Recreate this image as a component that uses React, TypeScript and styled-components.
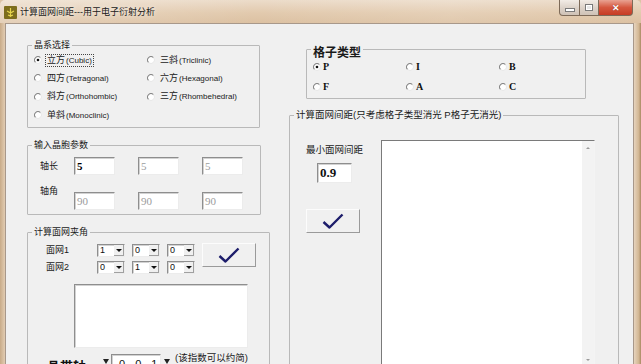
import React from 'react'
import styled, {createGlobalStyle} from 'styled-components'

const GlobalStyle = createGlobalStyle`
    html, body {
        margin: 0;
        padding: 0;
        background: #f0f0f0;
    }
    body {
        font-family: "Liberation Sans", "Noto Sans CJK SC", sans-serif;
        color: #111;
    }
`

const crystalSystems = [
    ['立方', 'Cubic'],
    ['三斜', 'Triclinic'],
    ['四方', 'Tetragonal'],
    ['六方', 'Hexagonal'],
    ['斜方', 'Orthohombic'],
    ['三方', 'Rhombehedral'],
    ['单斜', 'Monoclinic'],
]

const latticeTypes = ['P', 'I', 'B', 'F', 'A', 'C']

const Radio = ({checked}: {checked?: boolean}) => (
    <RadioSvg width="8" height="8" viewBox="0 0 12 12">
        <circle cx="6" cy="6" r="5" fill="#fff" />
        <path d="M9.6 2.4 A5 5 0 0 0 2.4 9.6" stroke="#8a8a8a" strokeWidth="1.6" fill="none" />
        <path d="M9.6 2.4 A5 5 0 0 1 2.4 9.6" stroke="#e4e4e4" strokeWidth="1.2" fill="none" />
        {checked && <circle cx="6" cy="6" r="2" fill="#111" />}
    </RadioSvg>
)

const Check = () => (
    <svg width="22" height="16" viewBox="0 0 22 16">
        <path d="M1.5 9 L7.5 14.5 L20.5 1.5" stroke="#1d1d6b" strokeWidth="2.4" fill="none" strokeLinejoin="round" />
    </svg>
)

const Combo = ({value}: {value: string}) => (
    <ComboBox>
        <ComboText>{value}</ComboText>
        <ComboButton>
            <DownTriangle />
        </ComboButton>
    </ComboBox>
)

export default function App() {
    return (
        <Window>
            <GlobalStyle />
            <TitleBar>
                <TitleIcon width="13" height="13" viewBox="0 0 13 13">
                    <rect x="0" y="0" width="13" height="13" rx="1" fill="#7d6d1c" />
                    <path d="M6.5 2 L6.5 11 M3 5 L6.5 7 L10 5 M4 9 L6.5 10 L9 9" stroke="#e8d64a" strokeWidth="1.2" fill="none" />
                </TitleIcon>
                <TitleText>计算面网间距---用于电子衍射分析</TitleText>
                <CaptionButtons>
                    <CaptionButton $w={21}>
                        <MinGlyph />
                    </CaptionButton>
                    <CaptionButton $w={19}>
                        <MaxGlyph />
                    </CaptionButton>
                    <CaptionButton $w={34} $close>
                        <CloseGlyph>✕</CloseGlyph>
                    </CaptionButton>
                </CaptionButtons>
            </TitleBar>
            <FrameRow>
                <SideFrame $w={5} />
                <Client>
                    <LeftColumn>
                        <GroupBox $w={233} $h={83}>
                            <GroupTitle>晶系选择</GroupTitle>
                            <SystemGrid>
                                {crystalSystems.map(([cn, en], i) => (
                                    <RadioItem key={en} $gap={4}>
                                        <Radio checked={i === 0} />
                                        <RadioText $focus={i === 0}>
                                            {cn}
                                            <Latin>({en})</Latin>
                                        </RadioText>
                                    </RadioItem>
                                ))}
                            </SystemGrid>
                        </GroupBox>

                        <GroupBox $w={234} $h={70} $mt={17}>
                            <GroupTitle>输入晶胞参数</GroupTitle>
                            <ParamGrid>
                                <ParamLabel>轴长</ParamLabel>
                                <Field>5</Field>
                                <Field $dim>5</Field>
                                <Field $dim>5</Field>
                                <ParamLabel $raised>轴角</ParamLabel>
                                <Field $dim>90</Field>
                                <Field $dim>90</Field>
                                <Field $dim>90</Field>
                            </ParamGrid>
                        </GroupBox>

                        <GroupBox $w={243} $h={200} $mt={17}>
                            <GroupTitle>计算面网夹角</GroupTitle>
                            <PlaneGrid>
                                <PlaneLabel>面网1</PlaneLabel>
                                <Combo value="1" />
                                <Combo value="0" />
                                <Combo value="0" />
                                <PlaneButton>
                                    <Check />
                                </PlaneButton>
                                <PlaneLabel>面网2</PlaneLabel>
                                <Combo value="0" />
                                <Combo value="1" />
                                <Combo value="0" />
                            </PlaneGrid>
                            <AngleResult />
                            <ZoneRow>
                                <ZoneLabel>晶带轴</ZoneLabel>
                                <SpinArrow />
                                <SpinBox>
                                    <span>0</span>
                                    <span>0</span>
                                    <span>1</span>
                                </SpinBox>
                                <SpinArrow $right />
                                <Hint>(该指数可以约简)</Hint>
                            </ZoneRow>
                        </GroupBox>
                    </LeftColumn>

                    <RightColumn>
                        <GroupBox $w={280} $h={50} $mt={4} $ml={17}>
                            <GroupTitle $bold>格子类型</GroupTitle>
                            <LatticeGrid>
                                {latticeTypes.map((t, i) => (
                                    <RadioItem key={t} $gap={2}>
                                        <Radio checked={i === 0} />
                                        <LatticeText>{t}</LatticeText>
                                    </RadioItem>
                                ))}
                            </LatticeGrid>
                        </GroupBox>

                        <GroupBox $w={330} $h={260} $mt={16}>
                            <GroupTitle $wide>计算面网间距(只考虑格子类型消光 P格子无消光)</GroupTitle>
                            <SpacingRow>
                                <SpacingControls>
                                    <SpacingLabel>最小面网间距</SpacingLabel>
                                    <MinField>0.9</MinField>
                                    <SpacingButton>
                                        <Check />
                                    </SpacingButton>
                                </SpacingControls>
                                <ListBox>
                                    <ListArea />
                                    <ScrollBar>
                                        <ScrollArrow />
                                        <ScrollArrow $down />
                                    </ScrollBar>
                                </ListBox>
                            </SpacingRow>
                        </GroupBox>
                    </RightColumn>
                </Client>
                <SideFrame $w={7} $right />
            </FrameRow>
        </Window>
    )
}

const Window = styled('div')`
    width: 641px;
    height: 364px;
    overflow: hidden;
    display: flex;
    flex-direction: column;
    background: #dcc3a6;
`

const TitleBar = styled('div')`
    height: 23px;
    flex: none;
    display: flex;
    align-items: flex-start;
    background: linear-gradient(90deg, rgba(255, 255, 255, 0.25), rgba(255, 255, 255, 0) 40%, rgba(255, 255, 255, 0.12) 70%, rgba(255, 255, 255, 0)),
        linear-gradient(180deg, #ecdcca 0%, #e2caae 55%, #dcc1a2 100%);
    border-top-left-radius: 5px;
    border-top-right-radius: 5px;
`

const TitleIcon = styled('svg')`
    flex: none;
    margin: 6px 3px 0 4px;
`

const TitleText = styled('div')`
    margin-top: 6px;
    font-size: 9px;
    line-height: 12px;
    color: #1a1a1a;
    text-shadow: 0 0 5px rgba(255, 255, 255, 0.9);
    white-space: nowrap;
`

const CaptionButtons = styled('div')`
    display: flex;
    margin: 0 8px 0 auto;
    height: 16px;
`

const CaptionButton = styled('div')<{$w: number; $close?: boolean}>`
    width: ${(p) => p.$w}px;
    height: 16px;
    box-sizing: border-box;
    border: 1px solid #7d6a58;
    border-top: none;
    display: flex;
    align-items: center;
    justify-content: center;
    background: ${(p) =>
        p.$close
            ? 'linear-gradient(180deg, #e9a292 0%, #d5573f 50%, #c63c25 100%)'
            : 'linear-gradient(180deg, #f2ece6 0%, #ddd3ca 50%, #cfc2b6 100%)'};
    &:first-child {
        border-bottom-left-radius: 4px;
    }
    &:last-child {
        border-bottom-right-radius: 4px;
    }
    & + & {
        border-left: none;
    }
`

const MinGlyph = styled('div')`
    width: 8px;
    height: 2px;
    margin-top: 4px;
    background: #fff;
    border: 1px solid #7a7a7a;
`

const MaxGlyph = styled('div')`
    width: 6px;
    height: 5px;
    border: 1px solid #7a7a7a;
    box-shadow: inset 0 0 0 1px #fff;
    background: #e8e8e8;
`

const CloseGlyph = styled('span')`
    color: #fff;
    font-size: 9px;
    font-weight: bold;
    line-height: 10px;
    text-shadow: 0 0 1px #7a2010;
`

const FrameRow = styled('div')`
    flex: 1;
    display: flex;
    min-height: 0;
`

const SideFrame = styled('div')<{$w: number; $right?: boolean}>`
    width: ${(p) => p.$w}px;
    flex: none;
    background: ${(p) =>
        p.$right ? 'linear-gradient(90deg, #e6d3bd, #d2b692 70%, #a88862)' : 'linear-gradient(90deg, #c8ab88, #e2ccb2)'};
`

const Client = styled('div')`
    flex: 1;
    box-sizing: border-box;
    background: #f0f0f0;
    border: 1px solid #a8988a;
    border-bottom: none;
    display: grid;
    grid-template-columns: 243px 330px;
    column-gap: 19px;
    align-items: start;
    padding: 21px 0 0 21px;
`

const LeftColumn = styled('div')`
    display: flex;
    flex-direction: column;
`

const RightColumn = styled('div')`
    display: flex;
    flex-direction: column;
`

const GroupBox = styled('div')<{$w: number; $h: number; $mt?: number; $ml?: number}>`
    width: ${(p) => p.$w}px;
    height: ${(p) => p.$h}px;
    margin-top: ${(p) => p.$mt || 0}px;
    margin-left: ${(p) => p.$ml || 0}px;
    box-sizing: border-box;
    border: 1px solid #b9b9b9;
    border-radius: 1px;
    flex: none;
`

const GroupTitle = styled('div')<{$bold?: boolean; $wide?: boolean}>`
    width: fit-content;
    margin: ${(p) => (p.$bold ? '-4px' : '-7px')} 0 0 4px;
    padding: 0 2px;
    background: #f0f0f0;
    font-size: ${(p) => (p.$bold ? '12px' : p.$wide ? '9.5px' : '9px')};
    font-weight: ${(p) => (p.$bold ? 'bold' : 'normal')};
    line-height: ${(p) => (p.$bold ? '14px' : '12px')};
    color: #1a1a1a;
    white-space: nowrap;
`

const SystemGrid = styled('div')`
    display: grid;
    grid-template-columns: 113px 1fr;
    grid-auto-rows: 18.33px;
    align-items: center;
    padding-left: 6px;
`

const RadioItem = styled('div')<{$gap: number}>`
    display: flex;
    align-items: center;
    gap: ${(p) => p.$gap}px;
`

const RadioSvg = styled('svg')`
    flex: none;
    display: block;
`

const RadioText = styled('span')<{$focus?: boolean}>`
    font-size: 9px;
    line-height: 10px;
    padding: 0 1px;
    white-space: nowrap;
    color: #1a1a1a;
    ${(p) => (p.$focus ? 'outline: 1px dotted #444;' : '')}
`

const Latin = styled('span')`
    font-family: "Liberation Sans", sans-serif;
    font-size: 8px;
    margin-left: 1px;
`

const ParamGrid = styled('div')`
    display: grid;
    grid-template-columns: 34px 64px 64px 41px;
    grid-auto-rows: 18px;
    row-gap: 17px;
    padding: 6px 0 0 12px;
`

const ParamLabel = styled('div')<{$raised?: boolean}>`
    font-size: 9px;
    line-height: 12px;
    align-self: ${(p) => (p.$raised ? 'start' : 'center')};
    margin-top: ${(p) => (p.$raised ? '-7px' : '0')};
    color: #1a1a1a;
`

const sunken = `
    box-sizing: border-box;
    background: #fff;
    border: 1px solid;
    border-color: #8e8e8e #ececec #ececec #8e8e8e;
    box-shadow: inset 1px 1px 0 #d2d2d2;
`

const Field = styled('div')<{$dim?: boolean}>`
    ${sunken}
    width: 41px;
    height: 18px;
    padding-left: 2px;
    font-family: "Liberation Serif", serif;
    font-size: 11px;
    line-height: 16px;
    font-weight: ${(p) => (p.$dim ? 'normal' : 'bold')};
    color: ${(p) => (p.$dim ? '#9c9c9c' : '#000')};
`

const PlaneGrid = styled('div')`
    display: grid;
    grid-template-columns: 44px 28px 28px 28px 54px;
    grid-template-rows: 13px 13px;
    column-gap: 7px;
    row-gap: 4px;
    padding: 6px 0 0 18px;
`

const PlaneLabel = styled('div')`
    font-size: 9px;
    line-height: 12px;
    align-self: center;
    margin-top: -2px;
    color: #1a1a1a;
`

const ComboBox = styled('div')`
    ${sunken}
    display: flex;
    height: 13px;
`

const ComboText = styled('div')`
    flex: 1;
    font-size: 9px;
    line-height: 11px;
    padding-left: 2px;
`

const ComboButton = styled('div')`
    width: 10px;
    box-sizing: border-box;
    background: #f0f0f0;
    border-right: 1px solid #a0a0a0;
    border-bottom: 1px solid #a0a0a0;
    display: flex;
    align-items: center;
    justify-content: center;
`

const DownTriangle = styled('div')`
    width: 0;
    height: 0;
    border-left: 3px solid transparent;
    border-right: 3px solid transparent;
    border-top: 3px solid #111;
`

const buttonFace = `
    box-sizing: border-box;
    background: #f0f0f0;
    border: 1px solid;
    border-color: #fcfcfc #9a9a9a #9a9a9a #fcfcfc;
    display: flex;
    align-items: center;
    justify-content: center;
`

const PlaneButton = styled('div')`
    ${buttonFace}
    grid-column: 5;
    grid-row: 1 / 3;
    height: 24px;
    margin-top: -1px;
    align-self: start;
`

const AngleResult = styled('div')`
    ${sunken}
    width: 174px;
    height: 64px;
    margin: 10px 0 0 46px;
`

const ZoneRow = styled('div')`
    display: flex;
    align-items: flex-start;
    margin-top: 4px;
    padding-left: 19px;
`

const ZoneLabel = styled('div')`
    width: 56px;
    margin-top: 7px;
    font-size: 13px;
    font-weight: bold;
    line-height: 15px;
    white-space: nowrap;
`

const SpinArrow = styled('div')<{$right?: boolean}>`
    width: 0;
    height: 0;
    margin: 7px ${(p) => (p.$right ? '5px' : '2px')} 0 ${(p) => (p.$right ? '3px' : '0')};
    border-left: 3px solid transparent;
    border-right: 3px solid transparent;
    border-top: 5px solid #222;
`

const SpinBox = styled('div')`
    ${sunken}
    width: 50px;
    height: 20px;
    margin-top: 2px;
    display: flex;
    gap: 10px;
    padding-left: 7px;
    font-size: 11px;
    line-height: 18px;
    letter-spacing: 0;
`

const Hint = styled('div')`
    font-size: 9.5px;
    line-height: 12px;
    white-space: nowrap;
    color: #1a1a1a;
`

const LatticeGrid = styled('div')`
    display: grid;
    grid-template-columns: repeat(3, 93px);
    grid-auto-rows: 14px;
    row-gap: 6px;
    align-items: center;
    padding-left: 6px;
`

const LatticeText = styled('span')`
    font-family: "Liberation Serif", serif;
    font-weight: bold;
    font-size: 10px;
    line-height: 12px;
`

const SpacingRow = styled('div')`
    display: flex;
    align-items: flex-start;
`

const SpacingControls = styled('div')`
    width: 91px;
    box-sizing: border-box;
    padding-left: 16px;
    display: flex;
    flex-direction: column;
    align-items: flex-start;
`

const SpacingLabel = styled('div')`
    margin-top: 23px;
    font-size: 9.5px;
    line-height: 12px;
    white-space: nowrap;
    color: #1a1a1a;
`

const MinField = styled('div')`
    ${sunken}
    width: 35px;
    height: 20px;
    margin: 7px 0 0 11px;
    padding-left: 2px;
    font-family: "Liberation Serif", serif;
    font-weight: bold;
    font-size: 13px;
    line-height: 18px;
`

const SpacingButton = styled('div')`
    ${buttonFace}
    width: 54px;
    height: 24px;
    margin-top: 26px;
`

const ListBox = styled('div')`
    ${sunken}
    width: 214px;
    height: 230px;
    margin-top: 19px;
    display: flex;
    border-color: #7a7a7a #f4f4f4 #f4f4f4 #7a7a7a;
    box-shadow: inset 1px 1px 0 #b8b8b8;
`

const ListArea = styled('div')`
    flex: 1;
    background: #fff;
`

const ScrollBar = styled('div')`
    width: 12px;
    height: 224px;
    background: #f3f3f3;
    display: flex;
    flex-direction: column;
    justify-content: space-between;
    align-items: center;
    padding: 6px 0 4px;
    box-sizing: border-box;
`

const ScrollArrow = styled('div')<{$down?: boolean}>`
    width: 0;
    height: 0;
    border-left: 2px solid transparent;
    border-right: 2px solid transparent;
    ${(p) => (p.$down ? 'border-top: 2px solid #9a9a9a;' : 'border-bottom: 2px solid #9a9a9a;')}
`
